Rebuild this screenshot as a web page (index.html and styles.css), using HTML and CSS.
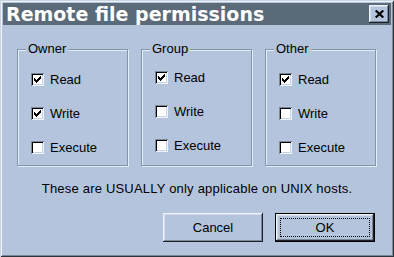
FILE: index.html
```html
<!DOCTYPE html>
<html lang="en">
<head>
    <meta charset="UTF-8">
    <title>Remote file permissions</title>
    <link rel="stylesheet" href="styles.css">
</head>
<body>

<div class="dialog">
    <div class="titlebar">
        <span class="title">Remote file permissions</span>
        <button class="close" type="button" aria-label="Close">
            <svg width="9" height="8" viewBox="0 0 9 8">
                <path d="M0.7 0.5 L8.3 7.5 M8.3 0.5 L0.7 7.5" stroke="#000" stroke-width="2.2" fill="none"/>
            </svg>
        </button>
    </div>

    <div class="groups">
        <div class="group">
            <span class="group-title">Owner</span>
            <label class="option"><span class="check checked"></span>Read</label>
            <label class="option"><span class="check checked"></span>Write</label>
            <label class="option"><span class="check"></span>Execute</label>
        </div>
        <div class="group group-raised">
            <span class="group-title">Group</span>
            <label class="option"><span class="check checked"></span>Read</label>
            <label class="option"><span class="check"></span>Write</label>
            <label class="option"><span class="check"></span>Execute</label>
        </div>
        <div class="group">
            <span class="group-title">Other</span>
            <label class="option"><span class="check checked"></span>Read</label>
            <label class="option"><span class="check"></span>Write</label>
            <label class="option"><span class="check"></span>Execute</label>
        </div>
    </div>

    <p class="note">These are USUALLY only applicable on UNIX hosts.</p>

    <div class="buttons">
        <button class="btn" type="button">Cancel</button>
        <button class="btn btn-default" type="button"><span class="focus">OK</span></button>
    </div>
</div>

</body>
</html>
```

FILE: styles.css
```css
body {
    margin: 0;
    background-color: #b4c4dc;
    font-family: 'Liberation Sans', Arial, sans-serif;
    font-size: 13px;
    color: #000;
}

.dialog {
    width: 394px;
    height: 257px;
    box-sizing: border-box;
    padding: 3px;
    background-color: #b4c4dc;
    box-shadow: inset 1px 1px 0 #c8d4e4, inset -1px -1px 0 #2c343c,
                inset 2px 2px 0 #eef4fc, inset -2px -2px 0 #7c8898;
}

/* Caption */
.titlebar {
    height: 22px;
    display: flex;
    align-items: center;
    justify-content: space-between;
    padding: 0 2px 0 3px;
    background-color: #5a6a78;
}

.title {
    font-family: 'DejaVu Sans', sans-serif;
    font-weight: bold;
    font-size: 19px;
    line-height: 22px;
    color: #fff;
}

.close {
    width: 20px;
    height: 18px;
    padding: 0;
    border: none;
    display: flex;
    align-items: center;
    justify-content: center;
    background-color: #b4c4dc;
    box-shadow: inset -1px -1px 0 #1c2028, inset 1px 1px 0 #eef4fc,
                inset -2px -2px 0 #7c8898, inset 2px 2px 0 #d0dcec;
}

/* Group boxes */
.groups {
    display: flex;
    gap: 13px;
    margin-top: 24px;
    padding-left: 14px;
}

.group {
    position: relative;
    width: 111px;
    height: 117px;
    box-sizing: border-box;
    padding: 23px 0 0 13px;
    border: 1px solid #8494ac;
    box-shadow: 1px 1px 0 #e4eef8, inset 1px 1px 0 #e4eef8;
    display: flex;
    flex-direction: column;
    gap: 21px;
}

.group-raised {
    padding-top: 21px;
}

.group-title {
    position: absolute;
    top: -9px;
    left: 8px;
    padding: 0 2px;
    line-height: 15px;
    background-color: #b4c4dc;
}

.option {
    display: flex;
    align-items: center;
    gap: 6px;
    height: 13px;
    line-height: 13px;
}

.check {
    width: 13px;
    height: 13px;
    box-sizing: border-box;
    flex: none;
    position: relative;
    background-color: #fff;
    box-shadow: inset 1px 1px 0 #7c8898, inset -1px -1px 0 #eef4fc,
                inset 2px 2px 0 #000, inset -2px -2px 0 #c8d4e4;
}

.check.checked::after {
    content: "";
    position: absolute;
    left: 3px;
    top: 3px;
    width: 7px;
    height: 7px;
    background: no-repeat center / 7px 7px
        url("data:image/svg+xml,%3Csvg xmlns='http://www.w3.org/2000/svg' width='7' height='7'%3E%3Cpath d='M0 2h1v1h1v1h1v-1h1v-1h1v-1h1v-1h1v3h-1v1h-1v1h-1v1h-1v1h-1v-1h-1v-1h-1v-1h-1z' fill='%23000'/%3E%3C/svg%3E");
}

.note {
    margin: 15px 0 0;
    text-align: center;
    line-height: 15px;
    letter-spacing: 0.2px;
}

/* Buttons */
.buttons {
    display: flex;
    justify-content: flex-end;
    gap: 12px;
    margin-top: 17px;
    padding-right: 16px;
}

.btn {
    width: 100px;
    height: 29px;
    padding: 0;
    border: none;
    font-family: inherit;
    font-size: 13px;
    color: #000;
    background-color: #b4c4dc;
    box-shadow: inset -1px -1px 0 #1c2028, inset 1px 1px 0 #eef4fc,
                inset -2px -2px 0 #7c8898, inset 2px 2px 0 #d0dcec;
}

.btn-default {
    display: flex;
    align-items: stretch;
    padding: 4px;
    border: 1px solid #000;
}

.focus {
    flex: 1;
    display: flex;
    align-items: center;
    justify-content: center;
    border: 1px dotted #000;
}
```
